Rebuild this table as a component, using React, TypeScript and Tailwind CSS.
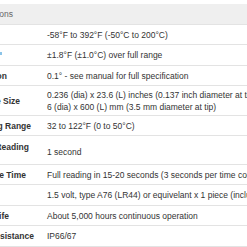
import React from 'react';

type Row = { label: string; end: number; value: React.ReactNode; h: string; top?: boolean };

const rows: Row[] = [
    { label: '', end: 0, value: '-58°F to 392°F (-50°C to 200°C)', h: 'h-[20px]' },
    { label: '', end: 0, value: '±1.8°F (±1.0°C) over full range', h: 'h-[21px]' },
    { label: 'Resolution', end: 7, value: '0.1° - see manual for full specification', h: 'h-[20px]' },
    {
        label: 'Probe Size',
        end: 20,
        value: (
            <>
                0.236 (dia) x 23.6 (L) inches (0.137 inch diameter at tip)
                <br />
                6 (dia) x 600 (L) mm (3.5 mm diameter at tip)
            </>
        ),
        h: 'h-[30px]',
    },
    { label: 'Operating Range', end: 31, value: '32 to 122°F (0 to 50°C)', h: 'h-[20px]' },
    { label: 'Display Reading', end: 29, value: '1 second', h: 'h-[29px]', top: true },
    { label: 'Response Time', end: 26, value: 'Full reading in 15-20 seconds (3 seconds per time constant)', h: 'h-[20px]' },
    { label: '', end: 0, value: '1.5 volt, type A76 (LR44) or equivelant x 1 piece (included)', h: 'h-[21px]' },
    { label: 'Battery Life', end: 9, value: 'About 5,000 hours continuous operation', h: 'h-[20px]' },
    { label: 'Water Resistance', end: 34, value: 'IP66/67', h: 'h-[21px]' },
];

const App: React.FC = () => {
    return (
        <div className="relative w-[247px] h-[247px] overflow-hidden bg-white pt-[4px] text-[8.5px] leading-[12px] text-[#333]" style={{ fontFamily: '"Liberation Sans", Arial, sans-serif' }}>
            <div className="flex h-[21px] items-center border-b border-[#e3e3e3] bg-[#efefef]">
                <div className="flex w-[47px] shrink-0 justify-end overflow-hidden whitespace-nowrap pr-[34px] text-[#666]">
                    Specifications
                </div>
            </div>
            {rows.map((r, i) => (
                <div key={i} className={`flex ${r.h} border-b border-[#e3e3e3]`}>
                    <div
                        className={`flex w-[47px] shrink-0 justify-end overflow-hidden whitespace-nowrap font-bold ${r.top ? 'items-start pt-[5px]' : 'items-center'}`}
                        style={{ paddingRight: 47 - r.end }}
                    >
                        {r.label}
                    </div>
                    <div className={`flex items-center whitespace-nowrap ${r.top ? 'pt-[3px]' : ''}`}>{r.value}</div>
                </div>
            ))}
            {/* tail of a link icon in the accuracy row */}
            <span className="absolute left-0 top-[52px] h-[3px] w-[2px] bg-[#8cc4e8]" />
        </div>
    );
};

export default App;
